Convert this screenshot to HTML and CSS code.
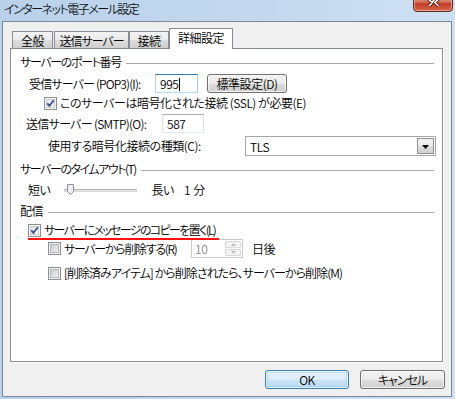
FILE: index.html
```html
<!DOCTYPE html>
<html lang="ja">
<head>
<meta charset="utf-8">
<title>インターネット電子メール設定</title>
<link rel="stylesheet" href="styles.css">
</head>
<body>
<svg class="defs" width="0" height="0" aria-hidden="true">
  <defs>
    <linearGradient id="cbOn" x1="0" y1="0" x2="1" y2="1">
      <stop offset="0" stop-color="#dfe3e8"/>
      <stop offset="1" stop-color="#fbfbfb"/>
    </linearGradient>
    <linearGradient id="cbOff" x1="0" y1="0" x2="1" y2="1">
      <stop offset="0" stop-color="#c6c9ce"/>
      <stop offset="1" stop-color="#f3f3f3"/>
    </linearGradient>
  </defs>
</svg>
<div class="window">
  <div class="titlebar">
    <span class="title">インターネット電子メール設定</span>
    <span class="close">
      <svg width="17" height="10" viewBox="0 0 17 10"><path d="M3.5 0 L7 3.5 L10 0 M13.5 0 L10 3.5 L13.5 7" fill="none" stroke="#5a1a12" stroke-width="3.2"/><path d="M3.5 0 L7 3.5 L10 0 M13.5 0 L10 3.5 L13.5 7" fill="none" stroke="#fff" stroke-width="1.6"/><path d="M4 7 L7 4" fill="none" stroke="#5a1a12" stroke-width="3.2"/><path d="M4 7 L7 4" fill="none" stroke="#fff" stroke-width="1.6"/></svg>
    </span>
  </div>
  <div class="client">
    <div class="tabs">
      <div class="tab t1">全般</div>
      <div class="tab t2">送信サーバー</div>
      <div class="tab t3">接続</div>
      <div class="tab t4 active">詳細設定</div>
    </div>
    <div class="panel">
      <div class="group g1"><span class="gtext ls-port">サーバーのポート番号</span><span class="rule"></span></div>

      <div class="row r-pop">
        <span class="lbl w-pop">受信サーバー (POP3)(I):</span>
        <span class="field focus f-pop">995<span class="caret"></span></span>
        <span class="btn btn-std">標準設定(D)</span>
      </div>

      <div class="row r-ssl">
        <svg class="cb" width="13" height="13" viewBox="0 0 13 13"><rect x="0.5" y="0.5" width="12" height="12" fill="#f6f6f6" stroke="#8e8f8f"/><rect x="2.5" y="2.5" width="8" height="8" fill="url(#cbOn)" stroke="#c8ccd2"/><path d="M3.3 6.4 L5.4 8.8 L9.8 3.2" fill="none" stroke="#3c4f8d" stroke-width="1.8"/></svg>
        <span class="ctext">このサーバーは暗号化された接続 (SSL) が必要(E)</span>
      </div>

      <div class="row r-smtp">
        <span class="lbl w-smtp">送信サーバー (SMTP)(O):</span>
        <span class="field f-smtp">587</span>
      </div>

      <div class="row r-enc">
        <span class="lbl w-enc">使用する暗号化接続の種類(C):</span>
        <span class="select">
          <span class="seltext">TLS</span>
          <span class="dropbtn"><svg width="7" height="4" viewBox="0 0 7 4"><path d="M0 0 H7 L3.5 4 Z" fill="#000"/></svg></span>
        </span>
      </div>

      <div class="group g2"><span class="gtext ls-timeout">サーバーのタイムアウト(T)</span><span class="rule"></span></div>

      <div class="row r-slide">
        <span class="lbl">短い</span>
        <span class="slider">
          <span class="track"></span>
          <svg class="thumb" width="7" height="11" viewBox="0 0 7 11"><path d="M0.5 0.5 H6.5 V7.5 L3.5 10.5 L0.5 7.5 Z" fill="#eceef0" stroke="#8b9097"/></svg>
        </span>
        <span class="lbl long">長い</span>
        <span class="lbl mins">1 分</span>
      </div>

      <div class="group g3"><span class="gtext">配信</span><span class="rule"></span></div>

      <div class="row r-copy">
        <svg class="cb" width="13" height="13" viewBox="0 0 13 13"><rect x="0.5" y="0.5" width="12" height="12" fill="#f6f6f6" stroke="#8e8f8f"/><rect x="2.5" y="2.5" width="8" height="8" fill="url(#cbOn)" stroke="#c8ccd2"/><path d="M3.3 6.4 L5.4 8.8 L9.8 3.2" fill="none" stroke="#3c4f8d" stroke-width="1.8"/></svg>
        <span class="ctext ls-copy">サーバーにメッセージのコピーを置く(L)</span>
      </div>

      <div class="row r-del">
        <svg class="cb" width="13" height="13" viewBox="0 0 13 13"><rect x="0.5" y="0.5" width="12" height="12" fill="#f4f4f4" stroke="#8e8f8f"/><rect x="2.5" y="2.5" width="8" height="8" fill="url(#cbOff)" stroke="#b3b7bd"/></svg>
        <span class="ctext w-del">サーバーから削除する(R)</span>
        <span class="spin">
          <span class="spintext">10</span>
          <span class="spinbtns">
            <span class="sb"><svg width="5" height="3" viewBox="0 0 5 3"><path d="M0 3 H5 L2.5 0 Z" fill="#b8bcc2"/></svg></span>
            <span class="sb"><svg width="5" height="3" viewBox="0 0 5 3"><path d="M0 0 H5 L2.5 3 Z" fill="#b8bcc2"/></svg></span>
          </span>
        </span>
        <span class="lbl days">日後</span>
      </div>

      <div class="row r-delm">
        <svg class="cb" width="13" height="13" viewBox="0 0 13 13"><rect x="0.5" y="0.5" width="12" height="12" fill="#f4f4f4" stroke="#8e8f8f"/><rect x="2.5" y="2.5" width="8" height="8" fill="url(#cbOff)" stroke="#b3b7bd"/></svg>
        <span class="ctext ls-delm">[削除済みアイテム] から削除されたら、サーバーから削除(M)</span>
      </div>
    </div>
    <div class="buttons">
      <span class="btn btn-ok">OK</span>
      <span class="btn btn-cancel">キャンセル</span>
    </div>
  </div>
</div>
</body>
</html>
```

FILE: styles.css
```css
html, body {
  margin: 0;
  padding: 0;
}
body {
  width: 455px;
  height: 399px;
  overflow: hidden;
  font-family: "Noto Sans CJK JP", "Noto Sans", sans-serif;
  font-size: 12px;
  font-weight: 350;
  line-height: 14px;
  letter-spacing: -0.45px;
  color: #000;
  font-feature-settings: "palt" 1;
}
.defs {
  position: absolute;
  width: 0;
  height: 0;
}
.window {
  width: 455px;
  height: 399px;
  background: linear-gradient(90deg, #b9d1ea 0%, #c4d9ef 60%, #cfe0f3 100%);
  display: flex;
  flex-direction: column;
}
.titlebar {
  height: 21px;
  display: flex;
  align-items: flex-start;
  padding-left: 4px;
  box-sizing: border-box;
}
.title {
  margin-top: 1px;
  font-size: 12px;
  line-height: 15px;
  color: #111;
  letter-spacing: -1.5px;
}
.close {
  margin-left: auto;
  margin-right: 2px;
  margin-top: -6px;
  width: 40px;
  height: 18px;
  box-sizing: border-box;
  border: 1px solid #5c2a24;
  border-radius: 0 0 4px 4px;
  background: linear-gradient(#e3a090 0%, #d2705a 45%, #c43a22 55%, #d66a48 100%);
  box-shadow: inset 0 0 0 1px rgba(255, 220, 200, 0.5);
  display: flex;
  justify-content: center;
  align-items: flex-end;
  padding-bottom: 2px;
}
.client {
  margin: 0 3px 2px 2px;
  height: 376px;
  box-sizing: border-box;
  border: 1px solid #7c8797;
  background: #f0f0f0;
  display: flex;
  flex-direction: column;
}
.tabs {
  margin-top: 6px;
  margin-left: 9px;
  height: 20px;
  display: flex;
  align-items: flex-end;
}
.tab {
  height: 17px;
  box-sizing: border-box;
  border: 1px solid #898c95;
  border-bottom: none;
  background: linear-gradient(#f3f3f3 0%, #ebebeb 50%, #dddddd 51%, #cfcfcf 100%);
  display: flex;
  justify-content: center;
  align-items: center;
  font-size: 12px;
  padding-top: 1px;
  white-space: nowrap;
}
.t1 { width: 41px; margin-right: 1px; }
.t2 { width: 75px; margin-right: 1px; letter-spacing: -1px; }
.t3 { width: 40px; margin-left: -1px; }
.t4 { width: 64px; }
.tab.active {
  height: 21px;
  margin-bottom: -1px;
  background: #fff;
  position: relative;
  z-index: 1;
  padding-top: 0;
  padding-bottom: 2px;
}
.panel {
  margin-left: 7px;
  width: 433px;
  height: 314px;
  box-sizing: border-box;
  border: 1px solid #898c95;
  background: #fff;
  box-shadow: 1px 1px 0 #ffffff;
  display: flex;
  flex-direction: column;
}
.group {
  display: flex;
  align-items: center;
  height: 16px;
  padding-left: 9px;
  padding-right: 8px;
}
.gtext {
  white-space: nowrap;
}
.ls-port { letter-spacing: -1.35px; }
.ls-timeout { letter-spacing: -1.45px; }
.rule {
  flex: 1;
  height: 1px;
  margin-left: 5px;
  background: #a9a9a9;
  margin-top: 2px;
}
.g1 { margin-top: 5px; }
.g2 { margin-top: 5px; }
.g3 { margin-top: 5px; }
.row {
  display: flex;
  align-items: center;
  white-space: nowrap;
}
.lbl { flex: none; }
.w-pop { width: 126px; letter-spacing: -0.85px; }
.w-smtp { width: 136px; letter-spacing: -0.7px; }
.w-enc { width: 197px; }
.w-del { width: 127px; letter-spacing: -1.3px; }
.r-pop { margin-top: 4px; height: 19px; padding-left: 18px; }
.f-pop { width: 43px; }
.btn-std { margin-left: 9px; width: 80px; height: 19px; }
.r-ssl { margin-top: 3px; height: 14px; padding-left: 33px; }
.ctext { margin-left: 3px; }
.ls-copy { letter-spacing: -1.65px; }
.ls-delm { letter-spacing: -0.95px; }
.r-smtp { margin-top: 4px; height: 19px; padding-left: 15px; }
.f-smtp { width: 42px; }
.r-enc { margin-top: 3px; height: 20px; padding-left: 37px; }
.r-slide { margin-top: 5px; height: 16px; padding-left: 17px; }
.r-copy {
  margin-top: 4px;
  height: 14px;
  padding-left: 17px;
  position: relative;
}
.r-copy::after {
  content: "";
  position: absolute;
  left: 17px;
  top: 15px;
  width: 191px;
  height: 2px;
  background: #ff1010;
}
.r-del { margin-top: 2px; height: 19px; padding-left: 37px; }
.r-delm { margin-top: 8px; height: 14px; padding-left: 37px; }
.cb {
  flex: none;
  display: block;
}
.field {
  height: 19px;
  box-sizing: border-box;
  border: 1px solid #abadb3;
  border-color: #abadb3 #dbdfe6 #e3e9ef #e2e3ea;
  background: #fff;
  display: flex;
  align-items: center;
  padding-left: 4px;
  padding-top: 1px;
}
.field.focus {
  border-color: #3d7bad #a4c9e3 #b7d9ed #b5cfe7;
}
.caret {
  width: 1px;
  height: 13px;
  background: #000;
  margin-left: 1px;
}
.select {
  width: 191px;
  height: 20px;
  box-sizing: border-box;
  border: 1px solid #a7a7a7;
  background: #fff;
  display: flex;
  align-items: center;
  padding: 1px 1px 1px 4px;
}
.seltext {
  flex: 1;
  padding-top: 1px;
}
.dropbtn {
  width: 17px;
  height: 16px;
  box-sizing: border-box;
  border: 1px solid #8e8f8f;
  background: linear-gradient(#f2f2f2 0%, #ebebeb 50%, #dddddd 51%, #cfcfcf 100%);
  display: flex;
  justify-content: center;
  align-items: center;
  padding-top: 1px;
}
.slider {
  margin-left: 14px;
  width: 73px;
  height: 16px;
  position: relative;
  display: flex;
  align-items: center;
}
.track {
  width: 73px;
  height: 3px;
  box-sizing: border-box;
  border: 1px solid #d6d6d6;
  border-top-color: #b0b0b0;
  background: #e7eaea;
}
.thumb {
  position: absolute;
  left: 3px;
  top: 2px;
}
.long { margin-left: 14px; }
.mins { margin-left: 10px; letter-spacing: 0; }
.spin {
  width: 52px;
  height: 19px;
  box-sizing: border-box;
  border: 1px solid #c9cbd0;
  background: #fff;
  display: flex;
  align-items: stretch;
}
.spintext {
  flex: 1;
  color: #8a8a8a;
  padding-left: 3px;
  display: flex;
  align-items: center;
  padding-top: 1px;
}
.spinbtns {
  width: 16px;
  display: flex;
  flex-direction: column;
  padding: 1px;
  gap: 1px;
}
.sb {
  flex: 1;
  box-sizing: border-box;
  border: 1px solid #d8dadd;
  background: #f4f4f4;
  display: flex;
  justify-content: center;
  align-items: center;
  border-radius: 1px;
}
.days { margin-left: 9px; }
.btn {
  box-sizing: border-box;
  border: 1px solid #707070;
  border-radius: 3px;
  background: linear-gradient(#f2f2f2 0%, #ebebeb 50%, #dddddd 51%, #cfcfcf 100%);
  box-shadow: inset 0 0 0 1px rgba(255, 255, 255, 0.75);
  display: flex;
  justify-content: center;
  align-items: center;
  padding-top: 1px;
  white-space: nowrap;
}
.buttons {
  margin-top: 8px;
  display: flex;
  justify-content: flex-end;
  padding-right: 6px;
  gap: 11px;
}
.btn-ok {
  width: 84px;
  height: 19px;
  border-color: #3c7fb1;
  background: linear-gradient(#e6f2fa 0%, #dbecf8 50%, #c9e3f5 51%, #bcdcf2 100%);
  box-shadow: inset 0 0 0 1px rgba(255, 255, 255, 0.7), inset 0 0 0 2px rgba(140, 200, 235, 0.45);
}
.btn-cancel {
  width: 85px;
  height: 19px;
  letter-spacing: -1px;
}
```
